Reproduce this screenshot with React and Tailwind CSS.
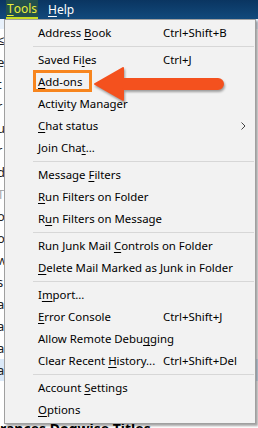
import React from 'react';

const items = [
  { label: 'Address Book', u: 8, key: 'Ctrl+Shift+B' },
  { sep: true },
  { label: 'Saved Files', u: 8, key: 'Ctrl+J' },
  { label: 'Add-ons', u: 0, boxed: true },
  { label: 'Activity Manager', u: 4 },
  { label: 'Chat status', u: 0, sub: true },
  { label: 'Join Chat...', u: 8 },
  { sep: true },
  { label: 'Message Filters', u: 8 },
  { label: 'Run Filters on Folder', u: 0 },
  { label: 'Run Filters on Message', u: 1 },
  { sep: true },
  { label: 'Run Junk Mail Controls on Folder', u: 14 },
  { label: 'Delete Mail Marked as Junk in Folder', u: 0 },
  { sep: true },
  { label: 'Import...', u: 1 },
  { label: 'Error Console', u: 0, key: 'Ctrl+Shift+J' },
  { label: 'Allow Remote Debugging', u: 17 },
  { label: 'Clear Recent History...', u: 13, key: 'Ctrl+Shift+Del' },
  { sep: true },
  { label: 'Account Settings', u: 8 },
  { label: 'Options', u: 0 },
];

function Mnemonic({ text, u }) {
  return (
    <>
      {text.slice(0, u)}
      <span className="underline underline-offset-2">{text[u]}</span>
      {text.slice(u + 1)}
    </>
  );
}

function MenuRow({ item }) {
  if (item.sep) {
    return (
      <div className="h-[5px] flex items-center">
        <div className="ml-[28px] mr-[1px] h-px flex-1 bg-[#d7d7d7]" />
      </div>
    );
  }
  return (
    <div className="relative h-[22px] flex items-center pl-[33px] whitespace-nowrap">
      <span className={item.key ? 'w-[125px] shrink-0' : ''}>
        <Mnemonic text={item.label} u={item.u} />
      </span>
      {item.key && <span>{item.key}</span>}
      {item.sub && (
        <svg className="absolute right-[9px] top-[7px]" width="5" height="8" viewBox="0 0 5 8">
          <path d="M0.5 0.5 L4 4 L0.5 7.5" fill="none" stroke="#444" strokeWidth="1" />
        </svg>
      )}
      {item.boxed && (
        <div className="absolute left-[28px] top-[-1px] w-[59px] h-[22px] border-[3px] border-[#f7851e]" />
      )}
    </div>
  );
}

export default function App() {
  return (
    <div className="relative w-[258px] h-[428px] overflow-hidden bg-white text-[11.4px] text-black font-['Segoe_UI','Noto_Sans',sans-serif]">
      {/* window menubar */}
      <div className="h-[19px] flex items-stretch bg-gradient-to-b from-[#0a3561] to-[#124a7c] text-[12px]">
        <div className="ml-[6px] w-[32px] flex items-center justify-center bg-[#23504c] border-b-2 border-[#c9dc25] text-[#e9ef3a]">
          <Mnemonic text="Tools" u={0} />
        </div>
        <div className="ml-[10px] flex items-center text-white">
          <Mnemonic text="Help" u={0} />
        </div>
      </div>

      {/* page behind the menu */}
      <div className="flex flex-col text-[13px] leading-[22px] text-[#222]">
        <div className="h-[10px] bg-[#e8f1fb]" />
        <div className="-ml-[3px]">≤</div>
        <div className="-ml-[3px]">e</div>
        <div className="-ml-[3px]">t</div>
        <div className="-ml-[3px]">r</div>
        <div className="-ml-[3px]">u</div>
        <div className="-ml-[3px]">r</div>
        <div className="-ml-[3px]">d</div>
        <div className="-ml-[3px] text-[#aaa]">T</div>
        <div className="-ml-[3px]">o</div>
        <div className="-ml-[3px]">o</div>
        <div className="-ml-[3px]">w</div>
        <div className="-ml-[3px]">s</div>
        <div className="-ml-[3px]">a</div>
        <div className="-ml-[3px]">a</div>
        <div className="-ml-[3px]">a</div>
        <div className="-ml-[3px] bg-[#dbe9f8]">a</div>
        <div className="h-[28px]" />
      </div>
      <div className="absolute left-0 top-[420px] text-[14px] font-bold leading-[18px] whitespace-nowrap">
        rances Dogwise Titles
      </div>

      {/* dropdown menu */}
      <div className="absolute left-[4px] top-[19px] w-[252px] pt-[2px] pb-[2px] bg-[#f2f2f2] border border-[#a0a0a0] shadow-[2px_2px_2px_rgba(0,0,0,0.35)]">
        {items.map((item, i) => (
          <MenuRow key={i} item={item} />
        ))}
      </div>

      {/* callout arrow */}
      <svg className="absolute left-[92px] top-[64px] drop-shadow-[1px_2px_1px_rgba(0,0,0,0.35)]" width="134" height="40" viewBox="0 0 134 40">
        <path
          d="M3 20 L31 4 L31 15 L126 15 A5 5 0 0 1 126 25 L31 25 L31 36 Z"
          fill="#f4511e"
          strokeLinejoin="round"
          stroke="#f4511e"
          strokeWidth="2"
        />
      </svg>
    </div>
  );
}
